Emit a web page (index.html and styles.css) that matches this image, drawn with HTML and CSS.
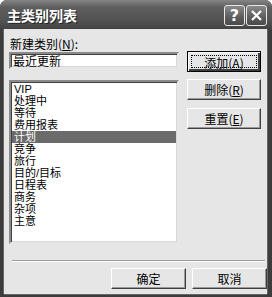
FILE: index.html
```html
<!DOCTYPE html>
<html lang="zh-CN">

<head>
    <meta charset="UTF-8">
    <title>主类别列表</title>
    <link rel="stylesheet" href="styles.css">
</head>

<body>
    <div class="window">
        <header class="titlebar">
            <h1 class="titlebar__title">主类别列表</h1>
            <div class="titlebar__btns">
                <span class="titlebar__btn">?</span>
                <span class="titlebar__btn">
                    <svg width="13" height="13" viewBox="0 0 13 13">
                        <path d="M2 2 L11 11 M11 2 L2 11" stroke="#fff" stroke-width="2.2" fill="none" />
                    </svg>
                </span>
            </div>
        </header>

        <main class="client">
            <div class="top">
                <div class="left">
                    <label class="left__label">新建类别(<u>N</u>):</label>
                    <div class="field">最近更新</div>
                    <ul class="list">
                        <li class="list__item">VIP</li>
                        <li class="list__item">处理中</li>
                        <li class="list__item">等待</li>
                        <li class="list__item">费用报表</li>
                        <li class="list__item list__item--active"><span>计划</span></li>
                        <li class="list__item">竞争</li>
                        <li class="list__item">旅行</li>
                        <li class="list__item">目的/目标</li>
                        <li class="list__item">日程表</li>
                        <li class="list__item">商务</li>
                        <li class="list__item">杂项</li>
                        <li class="list__item">主意</li>
                    </ul>
                </div>
                <div class="right">
                    <button class="btn btn--default"><span class="btn__focus">添加(<u>A</u>)</span></button>
                    <button class="btn">删除(<u>R</u>)</button>
                    <button class="btn btn--last">重置(<u>E</u>)</button>
                </div>
            </div>

            <div class="sep"></div>

            <footer class="footer">
                <button class="btn btn--wide">确定</button>
                <button class="btn btn--wide">取消</button>
            </footer>
        </main>
    </div>
</body>

</html>
```

FILE: styles.css
```css
* {
    padding: 0;
    margin: 0;
    box-sizing: border-box;
}

body {
    font-family: "Noto Sans CJK SC", "DejaVu Sans", sans-serif;
    font-size: 12px;
    color: #000;
    background: #fff;
}

.window {
    width: 272px;
    height: 297px;
    background: #3c3c3c;
    border-radius: 7px 7px 0 0;
    display: flex;
    flex-direction: column;
    overflow: hidden;
}

.titlebar {
    height: 29px;
    display: flex;
    align-items: center;
    justify-content: space-between;
    padding: 0 5px 0 7px;
    background: linear-gradient(#858585, #5e5e5e 25%, #535353 70%, #424242);
}

.titlebar__title {
    font-size: 14px;
    font-weight: bold;
    color: #fff;
    text-shadow: 1px 1px 0 #222;
    line-height: 14px;
}

.titlebar__btns {
    display: flex;
    gap: 1px;
    margin-top: 1px;
}

.titlebar__btn {
    width: 21px;
    height: 21px;
    border: 1px solid #e8e8e8;
    border-radius: 3px;
    background: linear-gradient(#8a8a8a, #5c5c5c 60%, #4a4a4a);
    color: #fff;
    font-family: "DejaVu Sans", sans-serif;
    font-weight: bold;
    font-size: 16px;
    line-height: 19px;
    display: flex;
    align-items: center;
    justify-content: center;
}

.client {
    flex: 1;
    margin: 0 5px 3px 4px;
    background: #e6e6e6;
    padding: 7px 0 0 5px;
    box-shadow: -1px 0 0 #666, 1px 0 0 #666, 0 1px 0 #666;
}

.top {
    display: flex;
    gap: 8px;
}

.left {
    width: 170px;
    display: flex;
    flex-direction: column;
}

.left__label {
    line-height: 15px;
    padding-left: 1px;
    margin-bottom: 1px;
}

.field,
.list {
    background: #fff;
    border: 2px solid;
    border-color: #8a8a8a #e6e6e6 #e6e6e6 #8a8a8a;
    box-shadow: inset 1px 1px 0 #404040, inset -1px -1px 0 #d8d8d8;
}

.field {
    height: 17px;
    line-height: 13px;
    padding-left: 2px;
}

.list {
    margin-top: 11px;
    height: 164px;
    list-style: none;
    padding: 1px 1px 0 0;
    font-family: "Liberation Sans", "Noto Sans CJK SC", sans-serif;
    font-size: 11px;
}

.list__item {
    height: 12px;
    line-height: 12px;
    padding-left: 3px;
}

.list__item--active {
    background: #6b6b6b;
    color: #fff;
    margin-left: 1px;
    padding-left: 2px;
}

.right {
    display: flex;
    flex-direction: column;
    padding-top: 15px;
}

.btn {
    width: 74px;
    height: 21px;
    font-family: inherit;
    font-size: 12px;
    color: #000;
    background: #e6e6e6;
    border: 1px solid;
    border-color: #fff #404040 #404040 #fff;
    box-shadow: inset -1px -1px 0 #9a9a9a;
    margin-bottom: 7px;
}

.btn--default {
    border: 1px solid #000;
    box-shadow: inset 1px 1px 0 #fff, inset -2px -2px 0 #404040;
    padding: 3px;
}

.btn__focus {
    display: block;
    height: 13px;
    line-height: 13px;
    border: 1px dotted #000;
}

.btn--last {
    margin-top: 1px;
}

.btn--wide {
    width: 75px;
    margin-bottom: 0;
}

.sep {
    margin: 16px 2px 0 3px;
    height: 2px;
    border-top: 1px solid #9a9a9a;
    border-bottom: 1px solid #fff;
}

.footer {
    display: flex;
    justify-content: flex-end;
    gap: 6px;
    padding: 6px 0 0 0;
}
```
